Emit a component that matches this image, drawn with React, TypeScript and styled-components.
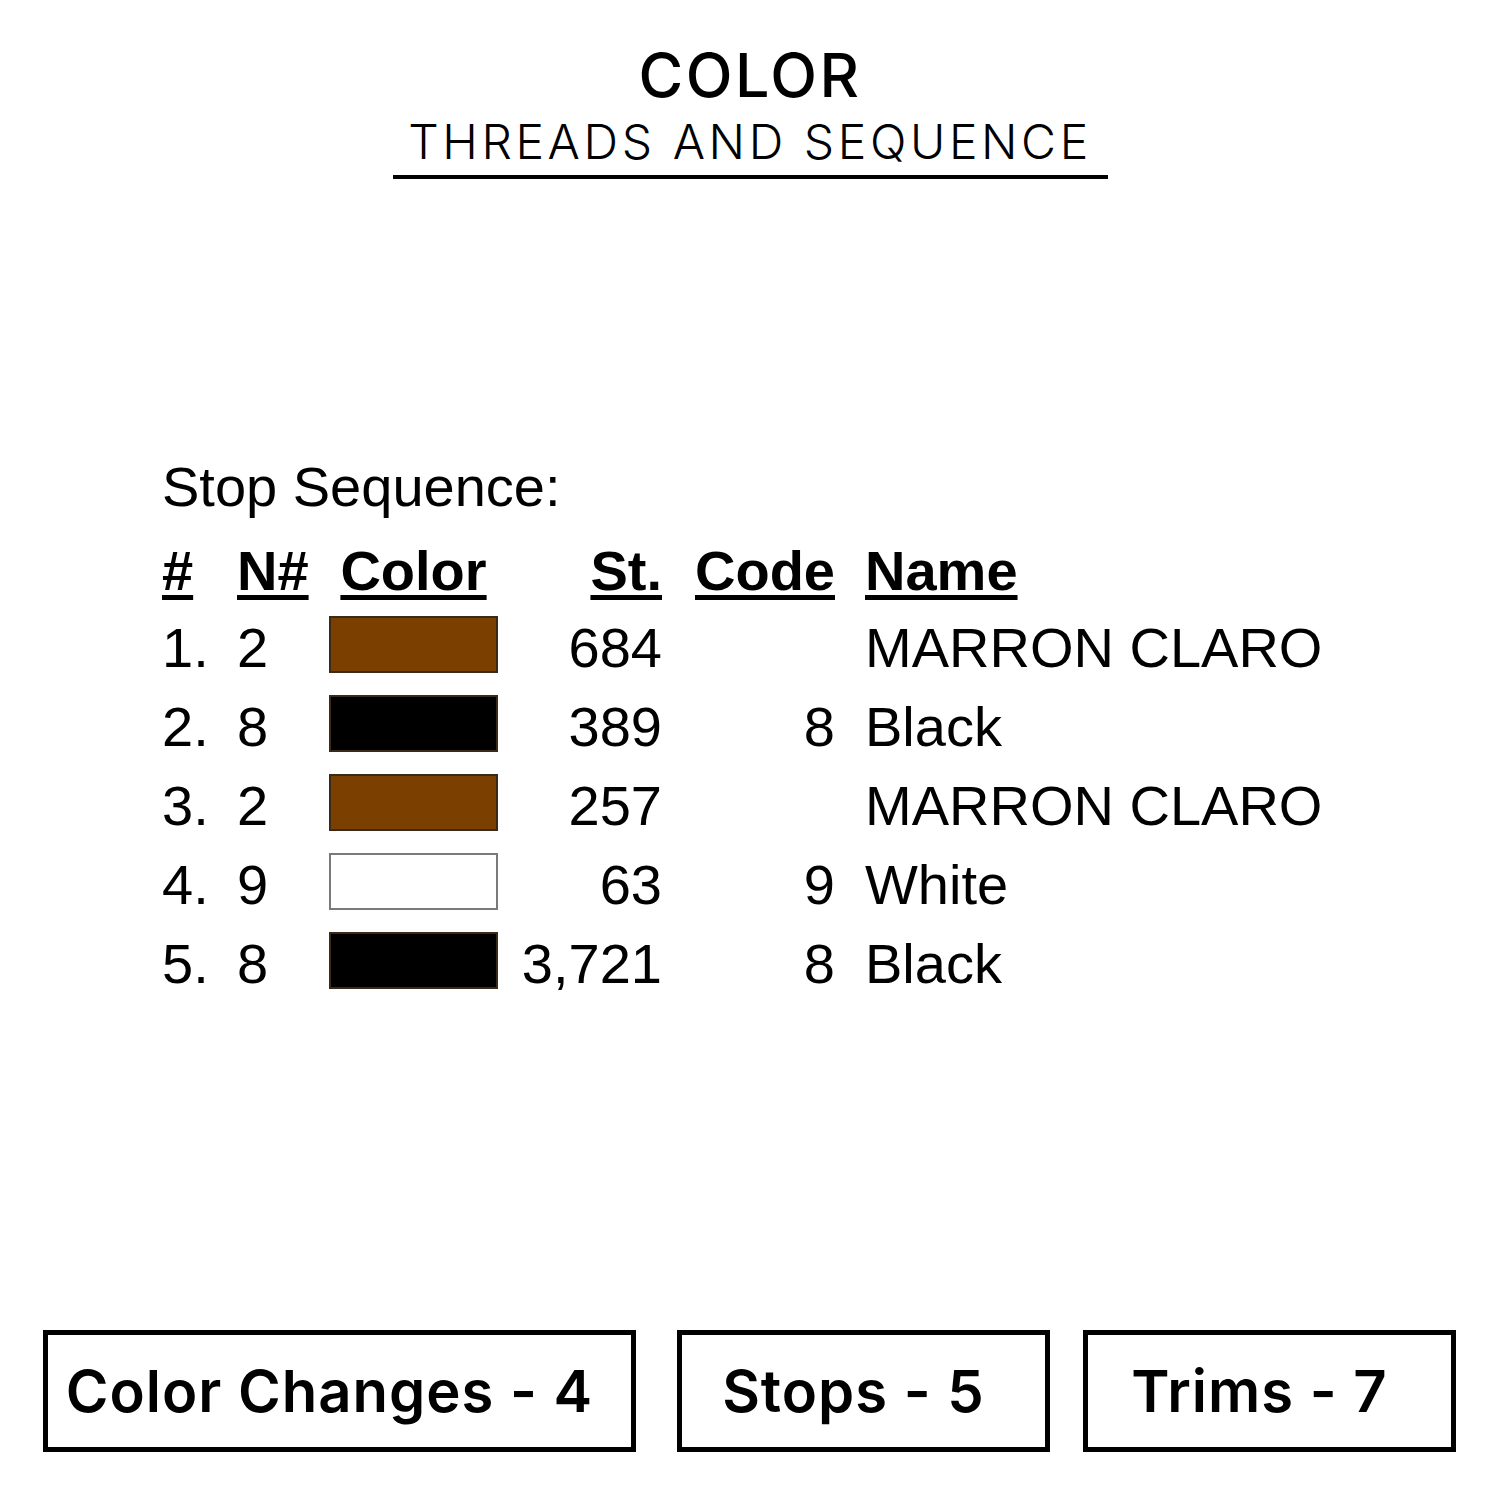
import React from 'react'
import styled, { createGlobalStyle } from 'styled-components'

const GlobalStyle = createGlobalStyle`
  html, body {
    margin: 0;
    padding: 0;
    background: #ffffff;
  }
`

const Page = styled.div`
  width: 1500px;
  height: 1500px;
  display: flex;
  flex-direction: column;
  background: #ffffff;
  color: #000000;
  box-sizing: border-box;
`

const Header = styled.header`
  display: flex;
  flex-direction: column;
  align-items: center;
  padding-top: 42px;
  font-family: Inter, "Open Sans", sans-serif;
`

const Title = styled.h1`
  margin: 0;
  font-size: 61px;
  font-weight: 500;
  line-height: 66px;
  letter-spacing: 2.5px;
`

const Subtitle = styled.h2`
  margin: 8px 0 0;
  font-size: 48px;
  font-weight: 300;
  line-height: 52px;
  letter-spacing: 3.6px;
`

const Rule = styled.div`
  width: 715px;
  height: 4px;
  margin-top: 7px;
  background: #000000;
`

const Sequence = styled.section`
  margin-top: 268px;
  padding-left: 162px;
  font-family: "Liberation Sans", Arial, sans-serif;
`

const SequenceLabel = styled.div`
  font-size: 56px;
  line-height: 79px;
  margin-bottom: 7px;
`

const Table = styled.div`
  display: grid;
  grid-template-columns: 75px 92px 169px 164px 173px auto;
  font-size: 56px;
`

const HeadCell = styled.div<{ $align?: 'left' | 'right' | 'center'; $pad?: number }>`
  font-weight: 700;
  line-height: 75px;
  height: 75px;
  text-align: ${p => p.$align || 'left'};
  padding-left: ${p => p.$pad || 0}px;
  span {
    text-decoration: underline;
    text-decoration-thickness: 5px;
    text-underline-offset: 5px;
  }
`

const Cell = styled.div<{ $align?: 'left' | 'right'; $pad?: number }>`
  line-height: 79px;
  height: 79px;
  white-space: nowrap;
  text-align: ${p => p.$align || 'left'};
  padding-left: ${p => p.$pad || 0}px;
`

const Swatch = styled.div<{ $color: string }>`
  width: 169px;
  height: 57px;
  margin-top: 8px;
  box-sizing: border-box;
  background: ${p => p.$color};
  border: 2px solid ${p => (p.$color === '#ffffff' ? '#7a7a7a' : '#3a2a1a')};
`

const Stats = styled.footer`
  margin-top: auto;
  padding: 0 44px 48px 43px;
  display: flex;
`

const StatBox = styled.div<{ $width: number; $gap: number }>`
  width: ${p => p.$width}px;
  margin-left: ${p => p.$gap}px;
  height: 122px;
  box-sizing: border-box;
  border: 5px solid #000000;
  display: flex;
  align-items: center;
  justify-content: center;
  padding-right: 20px;
  font-family: Inter, "Open Sans", sans-serif;
  font-weight: 600;
  font-size: 58px;
  letter-spacing: 1px;
`

const rows = [
  { n: '1.', needle: '2', color: '#7b3f00', st: '684', code: '', name: 'MARRON CLARO' },
  { n: '2.', needle: '8', color: '#000000', st: '389', code: '8', name: 'Black' },
  { n: '3.', needle: '2', color: '#7b3f00', st: '257', code: '', name: 'MARRON CLARO' },
  { n: '4.', needle: '9', color: '#ffffff', st: '63', code: '9', name: 'White' },
  { n: '5.', needle: '8', color: '#000000', st: '3,721', code: '8', name: 'Black' },
]

const App = () => {
  return (
    <Page>
      <GlobalStyle />
      <Header>
        <Title>COLOR</Title>
        <Subtitle>THREADS AND SEQUENCE</Subtitle>
        <Rule />
      </Header>

      <Sequence>
        <SequenceLabel>Stop Sequence:</SequenceLabel>
        <Table>
          <HeadCell><span>#</span></HeadCell>
          <HeadCell><span>N#</span></HeadCell>
          <HeadCell $align="center"><span>Color</span></HeadCell>
          <HeadCell $align="right"><span>St.</span></HeadCell>
          <HeadCell $align="right"><span>Code</span></HeadCell>
          <HeadCell $pad={30}><span>Name</span></HeadCell>
          {rows.map((r, i) => (
            <React.Fragment key={i}>
              <Cell>{r.n}</Cell>
              <Cell>{r.needle}</Cell>
              <Cell><Swatch $color={r.color} /></Cell>
              <Cell $align="right">{r.st}</Cell>
              <Cell $align="right">{r.code}</Cell>
              <Cell $pad={30}>{r.name}</Cell>
            </React.Fragment>
          ))}
        </Table>
      </Sequence>

      <Stats>
        <StatBox $width={593} $gap={0}>Color Changes - 4</StatBox>
        <StatBox $width={373} $gap={41}>Stops - 5</StatBox>
        <StatBox $width={373} $gap={33}>Trims - 7</StatBox>
      </Stats>
    </Page>
  )
}

export default App
